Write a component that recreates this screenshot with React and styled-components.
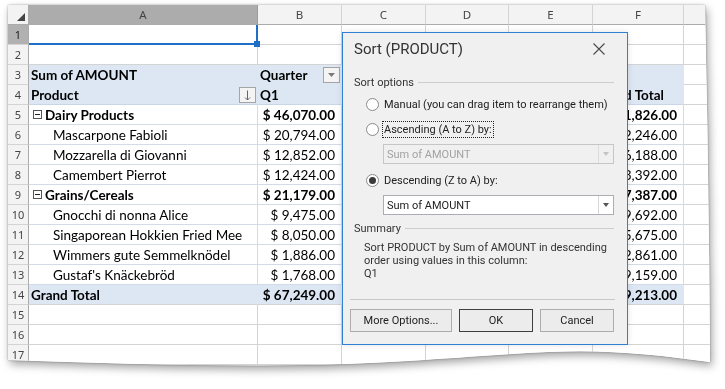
import React from "react";
import styled, { createGlobalStyle } from "styled-components";

// Arkusz z tabelą przestawną + okno "Sort (PRODUCT)" nad nim

const GlobalStyle = createGlobalStyle`
  html, body { margin: 0; padding: 0; background: #fff; }
  body { width: 725px; height: 389px; overflow: hidden; }
  * { box-sizing: border-box; }
`;

const COLS = [21, 229, 84, 84, 83, 84, 91, 30];
const LETTERS = ["A", "B", "C", "D", "E", "F", ""];

const Stage = styled.div`
  position: relative;
  width: 725px;
  height: 389px;
  padding: 5px 0 0 8px;
`;

const Paper = styled.div`
  width: 706px;
  filter: drop-shadow(0 0 1px rgba(0, 0, 0, 0.3)) drop-shadow(2px 4px 4px rgba(0, 0, 0, 0.35));
`;

const Sheet = styled.div`
  display: grid;
  grid-template-columns: ${COLS.map((w) => w + "px").join(" ")};
  grid-auto-rows: 20px;
  width: 706px;
  height: 364px;
  background: #fff;
  clip-path: path("M0 0 H697 Q701 180 702 357 C650 350 600 344 540 347 C470 350 400 358 300 360 C200 362 100 358 0 355 Z");
  font-family: Lato, "Noto Sans", sans-serif;
  font-size: 13.5px;
  color: #000;
`;

const Corner = styled.div`
  position: relative;
  background: #f3f3f3;
  border-right: 1px solid #ababab;
  border-bottom: 1px solid #ababab;

  &::after {
    content: "";
    position: absolute;
    right: 3px;
    bottom: 3px;
    border-style: solid;
    border-width: 0 0 8px 8px;
    border-color: transparent transparent #444 transparent;
  }
`;

const ColHead = styled.div`
  display: flex;
  align-items: center;
  justify-content: center;
  background: ${(p) => (p.$selected ? "#acacac" : "#f3f3f3")};
  border-right: 1px solid ${(p) => (p.$selected ? "#9c9c9c" : "#d4d4d4")};
  border-bottom: 1px solid #ababab;
  font-family: "Noto Sans", sans-serif;
  font-size: 11.5px;
  color: #444;
`;

const RowHead = styled.div`
  display: flex;
  align-items: center;
  justify-content: center;
  background: ${(p) => (p.$selected ? "#b1b1b1" : "#f3f3f3")};
  border-right: 1px solid #ababab;
  border-bottom: 1px solid #d4d4d4;
  font-family: "Noto Sans", sans-serif;
  font-size: 11px;
  color: ${(p) => (p.$selected ? "#222" : "#444")};
`;

const TONES = {
  plain: { bg: "#fff", right: "#d4d4d4", bottom: "#d4d4d4" },
  head: { bg: "#dde7f3", right: "#dde7f3", bottom: "#dde7f3" },
  headLast: { bg: "#dde7f3", right: "#dde7f3", bottom: "#c9d6e6" },
  body: { bg: "#fff", right: "#d3dbe6", bottom: "#d3dbe6" },
  total: { bg: "#dde7f3", right: "#dde7f3", bottom: "#d4d4d4" },
};

const Cell = styled.div`
  position: relative;
  display: flex;
  align-items: center;
  justify-content: ${(p) => (p.$align === "right" ? "flex-end" : "flex-start")};
  padding: 0 ${(p) => (p.$align === "right" ? "6px" : "2px")} 0 ${(p) => p.$indent || 2}px;
  background: ${(p) => TONES[p.$tone].bg};
  border-right: 1px solid ${(p) => TONES[p.$tone].right};
  border-bottom: 1px solid ${(p) => TONES[p.$tone].bottom};
  font-weight: ${(p) => (p.$bold ? 700 : 400)};
  white-space: nowrap;
`;

const ActiveCell = styled(Cell)`
  border-right: 2px solid #1e6fc5;
  border-bottom: 2px solid #1e6fc5;

  &::after {
    content: "";
    position: absolute;
    right: -4px;
    bottom: -4px;
    width: 6px;
    height: 6px;
    background: #1e6fc5;
    z-index: 2;
  }
`;

const Collapse = styled.span`
  position: relative;
  width: 9px;
  height: 9px;
  margin-right: 3px;
  border: 1px solid #555;
  background: #fff;
  flex: none;

  &::after {
    content: "";
    position: absolute;
    left: 1px;
    right: 1px;
    top: 3px;
    height: 1px;
    background: #222;
  }
`;

const FieldButton = styled.span`
  position: absolute;
  right: 1px;
  top: 2px;
  width: 17px;
  height: 16px;
  display: flex;
  align-items: center;
  justify-content: center;
  border: 1px solid #a5a5a5;
  background: #f4f4f4;
`;

const Dialog = styled.div`
  position: absolute;
  left: 342px;
  top: 32px;
  width: 286px;
  display: flex;
  flex-direction: column;
  padding: 0 13px 12px 11px;
  background: #f0f0f0;
  border: 1px solid #2f7fd6;
  box-shadow: 0 0 6px rgba(0, 0, 0, 0.12);
  font-family: Roboto, "Noto Sans", sans-serif;
  font-size: 11px;
  color: #222;
  white-space: nowrap;
`;

const TitleBar = styled.div`
  height: 31px;
  display: flex;
  align-items: center;
  justify-content: space-between;
  font-size: 15px;
  color: #333;
`;

const CloseButton = styled.span`
  display: flex;
  margin-right: 9px;
`;

const GroupHeader = styled.div`
  display: flex;
  align-items: center;
  height: 14px;
  margin-top: ${(p) => p.$top}px;
  color: #333;

  &::after {
    content: "";
    flex: 1;
    height: 1px;
    margin-left: 4px;
    background: #cdcdcd;
  }
`;

const RadioRow = styled.div`
  display: flex;
  align-items: center;
  height: 20px;
  margin-top: ${(p) => p.$top}px;
  padding-left: 12px;
`;

const RadioDot = styled.span`
  position: relative;
  width: 13px;
  height: 13px;
  margin-right: 3px;
  border-radius: 50%;
  border: 1px solid #8a8a8a;
  background: #fff;
  flex: none;

  &::after {
    content: "";
    display: ${(p) => (p.$checked ? "block" : "none")};
    position: absolute;
    left: 2px;
    top: 2px;
    width: 7px;
    height: 7px;
    border-radius: 50%;
    background: #3a3a3a;
  }
`;

const Label = styled.span`
  padding: 0 1px;
  line-height: 15px;
  border: 1px dotted ${(p) => (p.$focused ? "#222" : "transparent")};
`;

const Combo = styled.div`
  display: flex;
  height: 20px;
  margin: ${(p) => p.$top}px 0 0 29px;
  border: 1px solid ${(p) => (p.$disabled ? "#c6c6c6" : "#abadb3")};
  background: ${(p) => (p.$disabled ? "#f0f0f0" : "#fff")};
  color: ${(p) => (p.$disabled ? "#a2a2a2" : "#222")};
`;

const ComboText = styled.span`
  flex: 1;
  display: flex;
  align-items: center;
  padding-left: 3px;
`;

const ComboArrow = styled.span`
  width: 15px;
  display: flex;
  align-items: center;
  justify-content: center;
  border-left: 1px solid ${(p) => (p.$disabled ? "#dcdcdc" : "#d6d6d6")};

  &::after {
    content: "";
    border-style: solid;
    border-width: 4px 3.5px 0 3.5px;
    border-color: ${(p) => (p.$disabled ? "#c4c4c4" : "#555")} transparent transparent transparent;
  }
`;

const SummaryText = styled.div`
  margin-top: 6px;
  padding-left: 10px;
  line-height: 13px;
  color: #333;
`;

const Separator = styled.div`
  height: 1px;
  margin: 19px -1px 0 -4px;
  background: #c9c9c9;
`;

const Footer = styled.div`
  display: flex;
  gap: 7px;
  margin: 9px -1px 0 -4px;
`;

const Button = styled.button`
  width: ${(p) => p.$w}px;
  height: 23px;
  padding: 0;
  border: 1px solid ${(p) => (p.$default ? "#3f3f3f" : "#adadad")};
  background: #ececec;
  font-family: inherit;
  font-size: 11px;
  color: #222;
`;

const SortArrow = () => (
  <svg width="9" height="11" viewBox="0 0 9 11">
    <path d="M4.5 0.5 V10 M2 7.5 L4.5 10 L7 7.5" stroke="#666" strokeWidth="1" fill="none" />
  </svg>
);

const FilterArrow = () => (
  <svg width="7" height="4" viewBox="0 0 7 4">
    <path d="M0 0 H7 L3.5 4 Z" fill="#7a7a7a" />
  </svg>
);

const CloseIcon = () => (
  <svg width="12" height="12" viewBox="0 0 12 12">
    <path d="M0.5 0.5 L11.5 11.5 M11.5 0.5 L0.5 11.5" stroke="#4a4a4a" strokeWidth="1.1" />
  </svg>
);

// kolumny C–E leżą pod oknem dialogowym, więc zostają puste
const body = [
  { n: 5, group: "Dairy Products", q1: "$ 46,070.00", total: "$ 141,826.00" },
  { n: 6, name: "Mascarpone Fabioli", q1: "$ 20,794.00", total: "$ 62,246.00" },
  { n: 7, name: "Mozzarella di Giovanni", q1: "$ 12,852.00", total: "$ 46,188.00" },
  { n: 8, name: "Camembert Pierrot", q1: "$ 12,424.00", total: "$ 33,392.00" },
  { n: 9, group: "Grains/Cereals", q1: "$ 21,179.00", total: "$ 57,387.00" },
  { n: 10, name: "Gnocchi di nonna Alice", q1: "$ 9,475.00", total: "$ 19,692.00" },
  { n: 11, name: "Singaporean Hokkien Fried Mee", q1: "$ 8,050.00", total: "$ 15,675.00" },
  { n: 12, name: "Wimmers gute Semmelknödel", q1: "$ 1,886.00", total: "$ 12,861.00" },
  { n: 13, name: "Gustaf's Knäckebröd", q1: "$ 1,768.00", total: "$ 9,159.00" },
];

function SheetRows() {
  const out = [];
  out.push(<Corner key="corner" />);
  LETTERS.forEach((l, i) => (
    out.push(<ColHead key={"h" + i} $selected={i === 0}>{l}</ColHead>)
  ));

  const plainRow = (n) => {
    out.push(<RowHead key={"r" + n} $selected={n === 1}>{n}</RowHead>);
    for (let c = 0; c < 7; c++) {
      const Comp = n === 1 && c === 0 ? ActiveCell : Cell;
      out.push(<Comp key={n + "-" + c} $tone="plain" />);
    }
  };

  plainRow(1);
  plainRow(2);

  // wiersz 3: nagłówek tabeli przestawnej
  out.push(<RowHead key="r3">3</RowHead>);
  out.push(<Cell key="3-0" $tone="head" $bold>Sum of AMOUNT</Cell>);
  out.push(
    <Cell key="3-1" $tone="head" $bold>
      Quarter
      <FieldButton><FilterArrow /></FieldButton>
    </Cell>
  );
  [2, 3, 4, 5].forEach((c) => out.push(<Cell key={"3-" + c} $tone="head" />));
  out.push(<Cell key="3-6" $tone="plain" />);

  // wiersz 4
  out.push(<RowHead key="r4">4</RowHead>);
  out.push(
    <Cell key="4-0" $tone="headLast" $bold>
      Product
      <FieldButton><SortArrow /></FieldButton>
    </Cell>
  );
  ["Q1", "", "", "", "Grand Total"].forEach((t, i) =>
    out.push(<Cell key={"4-" + (i + 1)} $tone="headLast" $bold>{t}</Cell>)
  );
  out.push(<Cell key="4-6" $tone="plain" />);

  body.forEach((r) => {
    out.push(<RowHead key={"r" + r.n}>{r.n}</RowHead>);
    out.push(
      r.group ? (
        <Cell key={r.n + "-0"} $tone="body" $bold $indent={4}>
          <Collapse />
          {r.group}
        </Cell>
      ) : (
        <Cell key={r.n + "-0"} $tone="body" $indent={24}>{r.name}</Cell>
      )
    );
    [r.q1, "", "", "", r.total].forEach((v, i) =>
      out.push(
        <Cell key={r.n + "-" + (i + 1)} $tone="body" $align="right" $bold={!!r.group}>{v}</Cell>
      )
    );
    out.push(<Cell key={r.n + "-6"} $tone="plain" />);
  });

  // wiersz 14: suma końcowa
  out.push(<RowHead key="r14">14</RowHead>);
  out.push(<Cell key="14-0" $tone="total" $bold>Grand Total</Cell>);
  ["$ 67,249.00", "", "", "", "$ 199,213.00"].forEach((v, i) =>
    out.push(<Cell key={"14-" + (i + 1)} $tone="total" $align="right" $bold>{v}</Cell>)
  );
  out.push(<Cell key="14-6" $tone="plain" />);

  [15, 16, 17].forEach(plainRow);
  return out;
}

function SortDialog() {
  return (
    <Dialog>
      <TitleBar>
        <span>Sort (PRODUCT)</span>
        <CloseButton><CloseIcon /></CloseButton>
      </TitleBar>

      <GroupHeader $top={11}>Sort options</GroupHeader>
      <RadioRow $top={5}>
        <RadioDot />
        <Label>Manual (you can drag item to rearrange them)</Label>
      </RadioRow>
      <RadioRow $top={5}>
        <RadioDot />
        <Label $focused>Ascending (A to Z) by:</Label>
      </RadioRow>
      <Combo $top={5} $disabled>
        <ComboText>Sum of AMOUNT</ComboText>
        <ComboArrow $disabled />
      </Combo>
      <RadioRow $top={6}>
        <RadioDot $checked />
        <Label>Descending (Z to A) by:</Label>
      </RadioRow>
      <Combo $top={5}>
        <ComboText>Sum of AMOUNT</ComboText>
        <ComboArrow />
      </Combo>

      <GroupHeader $top={6}>Summary</GroupHeader>
      <SummaryText>
        Sort PRODUCT by Sum of AMOUNT in descending
        <br />
        order using values in this column:
        <br />
        Q1
      </SummaryText>

      <Separator />
      <Footer>
        <Button $w={102}>More Options...</Button>
        <Button $w={74} $default>OK</Button>
        <Button $w={74}>Cancel</Button>
      </Footer>
    </Dialog>
  );
}

export default function App() {
  return (
    <>
      <GlobalStyle />
      <Stage>
        <Paper>
          <Sheet>
            <SheetRows />
          </Sheet>
        </Paper>
        <SortDialog />
      </Stage>
    </>
  );
}
